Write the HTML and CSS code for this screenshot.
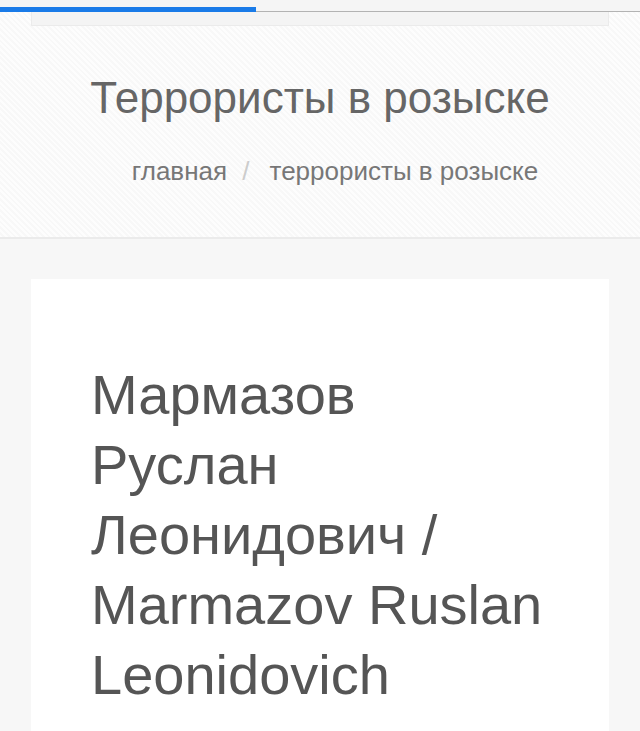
FILE: index.html
```html
<!DOCTYPE html>
<html>
<head>
    <title>Террористы в розыске</title>
    <link rel="stylesheet" href="styles.css">
</head>
<body>
    <div class="loadbar">
        <div class="progress"></div>
    </div>

    <header class="page-head">
        <div class="nav-box"></div>
        <h1 class="page-title">Террористы в розыске</h1>
        <ol class="breadcrumb">
            <li><a href="#">главная</a></li>
            <li class="active">террористы в розыске</li>
        </ol>
    </header>

    <main class="content">
        <article class="card">
            <h2 class="person-name">Мармазов Руслан Леонидович / Marmazov Ruslan Leonidovich</h2>
        </article>
    </main>
</body>
</html>
```

FILE: styles.css
```css
body { margin: 0; font-family: "Liberation Sans", Arial, sans-serif; background: #f7f7f7; color: #555; }

.loadbar {
    height: 12px;
    padding-top: 7px;
    box-sizing: border-box;
    background: #f5f5f5;
    border-bottom: 1px solid #b3b3b3;
}
.progress { width: 256px; height: 6px; background: #1a7be8; }

.page-head {
    padding-bottom: 48px;
    text-align: center;
    border-bottom: 2px solid #ebebeb;
    background: repeating-linear-gradient(45deg, #fdfdfd 0 2px, #f8f8f8 2px 4px);
}
.nav-box {
    height: 13px;
    margin: 0 31px;
    background: #f4f4f4;
    border: 1px solid #ebebeb;
    border-top: none;
}
.page-title {
    margin: 46px 0 0;
    font-size: 44px;
    line-height: 1.2;
    font-weight: normal;
    color: #666;
}
.breadcrumb {
    margin: 28px 0 0;
    padding: 0 0 0 30px;
    list-style: none;
    font-size: 26px;
    line-height: 36px;
    color: #777;
}
.breadcrumb li { display: inline; }
.breadcrumb li + li:before { content: "/"; color: #ccc; padding: 0 20px 0 8px; }
.breadcrumb a { color: #777; text-decoration: none; }

.content { padding: 40px 31px 0; }
.card { background: #fff; padding: 81px 60px 40px; }
.person-name {
    margin: 0;
    font-size: 56px;
    line-height: 70px;
    font-weight: normal;
    color: #555;
}
```
